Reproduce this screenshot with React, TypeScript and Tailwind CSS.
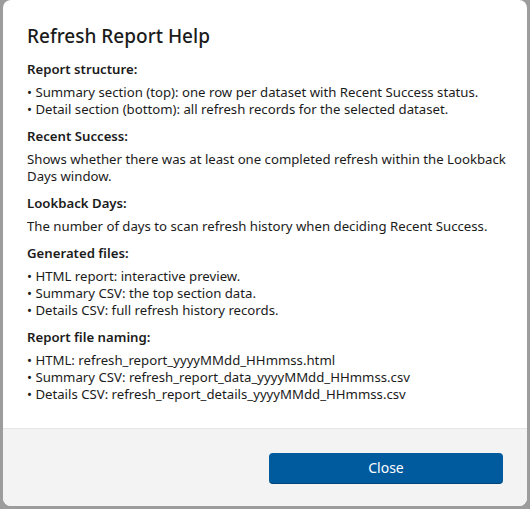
const sections: { heading: string; lines: string[]; bullets?: boolean }[] = [
  {
    heading: 'Report structure:',
    bullets: true,
    lines: [
      'Summary section (top): one row per dataset with Recent Success status.',
      'Detail section (bottom): all refresh records for the selected dataset.',
    ],
  },
  {
    heading: 'Recent Success:',
    lines: ['Shows whether there was at least one completed refresh within the Lookback Days window.'],
  },
  {
    heading: 'Lookback Days:',
    lines: ['The number of days to scan refresh history when deciding Recent Success.'],
  },
  {
    heading: 'Generated files:',
    bullets: true,
    lines: ['HTML report: interactive preview.', 'Summary CSV: the top section data.', 'Details CSV: full refresh history records.'],
  },
  {
    heading: 'Report file naming:',
    bullets: true,
    lines: [
      'HTML: refresh_report_yyyyMMdd_HHmmss.html',
      'Summary CSV: refresh_report_data_yyyyMMdd_HHmmss.csv',
      'Details CSV: refresh_report_details_yyyyMMdd_HHmmss.csv',
    ],
  },
]

export default function App() {
  return (
    <div
      className="h-[509px] w-[530px] overflow-hidden bg-[#9c9c9c] pl-[3px] pr-[3px] pb-[3px]"
      style={{ fontFamily: '"Noto Sans", "Open Sans", sans-serif' }}
    >
      <div className="flex h-[506px] flex-col overflow-hidden rounded-b-lg rounded-t-lg bg-white">
        <div className="flex-1 pl-6 pr-3 pt-[22px]">
          <h2 className="text-[19px] font-medium leading-[28px] text-[#1b1b1b]">Refresh Report Help</h2>
          <div className="mt-[11px] flex flex-col gap-[10px] text-[13.2px] leading-[17px] text-[#1b1b1b]">
            {sections.map((s) => (
              <div key={s.heading}>
                <div className="mb-[6px] font-semibold">{s.heading}</div>
                {s.lines.map((l) => (
                  <div key={l}>{s.bullets ? `• ${l}` : l}</div>
                ))}
              </div>
            ))}
          </div>
        </div>
        <div className="grid h-[78px] grid-cols-2 gap-2 border-t border-[#e5e5e5] bg-[#f3f3f3] px-6 pt-6">
          <div />
          <button className="h-[31px] rounded-[4px] border-b border-[#00457a] bg-[#005a9e] pb-[2px] text-[14px] text-white">
            Close
          </button>
        </div>
      </div>
    </div>
  )
}
